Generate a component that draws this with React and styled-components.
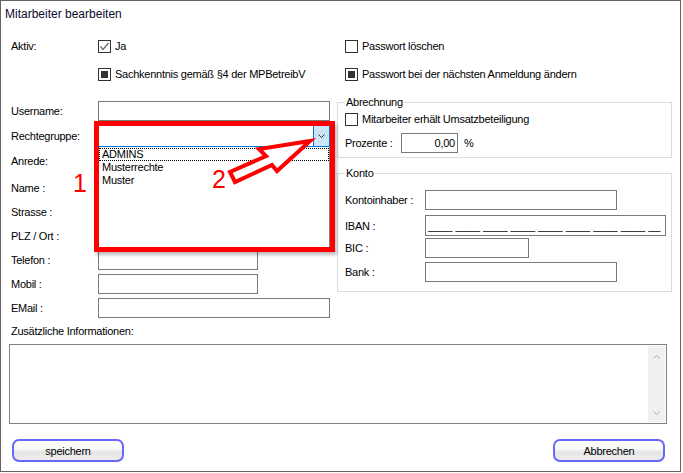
import React from "react";
import styled, { createGlobalStyle } from "styled-components";

const Global = createGlobalStyle`
  html, body { margin: 0; padding: 0; background: #fff; }
  body { font-family: "Liberation Sans", Arial, sans-serif; font-size: 11px; letter-spacing: -0.25px; color: #000; }
  * { box-sizing: border-box; }
`;

const Window = styled.div`
  position: relative;
  width: 681px;
  height: 472px;
  border: 1px solid #646464;
  background: #fff;
  overflow: hidden;
`;

const TitleBar = styled.div`
  height: 26px;
  padding-left: 4px;
  display: flex;
  align-items: center;
  font-size: 12px;
  letter-spacing: 0;
  color: #0b0b2b;
`;

const Body = styled.div`
  display: grid;
  grid-template-columns: 320px 335px;
  column-gap: 6px;
  padding: 9px 0 0 10px;
  align-items: start;
`;

const Column = styled.div`
  display: flex;
  flex-direction: column;
`;

const Row = styled.div`
  display: flex;
  align-items: center;
  height: ${(p) => p.$h || 20}px;
  margin-top: ${(p) => p.$mt || 0}px;
  padding-left: ${(p) => p.$pl || 0}px;
`;

const Label = styled.div`
  width: ${(p) => p.$w || 87}px;
  flex-shrink: 0;
  white-space: nowrap;
`;

const Field = styled.div`
  width: ${(p) => p.$w}px;
  height: 100%;
  border: 1px solid #7a7a7a;
  background: #fff;
  display: flex;
  align-items: center;
  justify-content: ${(p) => (p.$right ? "flex-end" : "flex-start")};
  padding: 0 2px;
  white-space: pre;
  flex-shrink: 0;
  letter-spacing: ${(p) => (p.$mask ? "0" : "inherit")};
`;

const Unit = styled.span`
  margin-left: 6px;
`;

const Box = styled.span`
  width: 13px;
  height: 13px;
  border: 1px solid #333;
  background: #fff;
  display: inline-flex;
  align-items: center;
  justify-content: center;
  flex-shrink: 0;
  margin-right: 4px;
`;

const Fill = styled.span`
  width: 7px;
  height: 7px;
  background: #333;
`;

const CheckLabel = styled.span`
  white-space: nowrap;
`;

function Check({ state, children }) {
  return (
    <>
      <Box>
        {state === "checked" && (
          <svg width="11" height="11" viewBox="0 0 11 11">
            <polyline points="1.5,5.5 4,8.5 9.5,2" fill="none" stroke="#6f6f6f" strokeWidth="1.4" />
          </svg>
        )}
        {state === "filled" && <Fill />}
      </Box>
      <CheckLabel>{children}</CheckLabel>
    </>
  );
}

const ComboWrap = styled.div`
  position: relative;
  width: 232px;
  height: 100%;
`;

const ComboBox = styled.div`
  height: 100%;
  border: 1px solid #0078d7;
  background: #fff;
  display: flex;
  justify-content: flex-end;
`;

const ComboButton = styled.div`
  width: 16px;
  height: 100%;
  background: #cce4f7;
  border-left: 1px solid #0078d7;
  display: flex;
  align-items: center;
  justify-content: center;
`;

const DropList = styled.div`
  position: absolute;
  left: 0;
  top: 100%;
  width: 232px;
  height: 105px;
  border: 1px solid #828282;
  border-top: none;
  background: #fff;
  padding-top: 1px;
  z-index: 2;
`;

const DropItem = styled.div`
  height: 13px;
  line-height: 11px;
  padding-left: 2px;
  border: 1px dotted ${(p) => (p.$focus ? "#000" : "transparent")};
  white-space: nowrap;
`;

const Group = styled.fieldset`
  margin: ${(p) => p.$mt}px 0 0 0;
  padding: 0 0 ${(p) => p.$pb}px 7px;
  border: 1px solid #dcdcdc;
  min-width: 0;
`;

const Legend = styled.legend`
  padding: 0 1px;
  margin: 0;
  font-size: 11px;
  line-height: 14px;
`;

const Bottom = styled.div`
  padding: 0 14px 0 8px;
`;

const InfoLabel = styled.div`
  margin-top: 4px;
  height: 18px;
  display: flex;
  align-items: center;
  padding-left: 2px;
`;

const Memo = styled.div`
  margin-top: 4px;
  width: 658px;
  height: 80px;
  border: 1px solid #828282;
  display: flex;
  justify-content: flex-end;
  padding: 1px;
`;

const ScrollBar = styled.div`
  width: 17px;
  background: #f0f0f0;
  display: flex;
  flex-direction: column;
  justify-content: space-between;
  align-items: center;
  padding: 9px 0 7px;
`;

const Buttons = styled.div`
  display: flex;
  justify-content: space-between;
  margin-top: 15px;
  padding: 0 1px 0 3px;
`;

const Button = styled.button`
  width: 112px;
  height: 23px;
  border: 2px solid #6868f8;
  border-radius: 7px;
  background: linear-gradient(#ffffff 0%, #fafafa 40%, #e6e6e6 60%, #ededed 100%);
  font: 11px "Liberation Sans", Arial, sans-serif;
  letter-spacing: -0.25px;
  color: #000;
  padding: 0;
`;

const RedFrame = styled.div`
  position: absolute;
  left: 93px;
  top: 120px;
  width: 241px;
  height: 131px;
  border: 5px solid #ff0000;
  box-shadow: 2px 3px 3px rgba(0, 0, 0, 0.25);
  pointer-events: none;
  z-index: 3;
`;

const Num = styled.div`
  position: absolute;
  left: ${(p) => p.$x}px;
  top: ${(p) => p.$y}px;
  font-size: 25px;
  line-height: 25px;
  letter-spacing: 0;
  color: #ff0000;
  z-index: 3;
`;

const ArrowSvg = styled.svg`
  position: absolute;
  left: 224px;
  top: 134px;
  overflow: visible;
  z-index: 4;
`;

const Chevron = ({ up, color = "#333" }) => (
  <svg width="7" height="4" viewBox="0 0 7 4">
    <polyline
      points={up ? "0.5,3.5 3.5,0.5 6.5,3.5" : "0.5,0.5 3.5,3.5 6.5,0.5"}
      fill="none"
      stroke={color}
      strokeWidth="1"
    />
  </svg>
);

export default function App() {
  return (
    <>
      <Global />
      <Window>
        <TitleBar>Mitarbeiter bearbeiten</TitleBar>
        <Body>
          <Column>
            <Row>
              <Label>Aktiv:</Label>
              <Check state="checked">Ja</Check>
            </Row>
            <Row $mt={8}>
              <Label />
              <Check state="filled">Sachkenntnis gemäß §4 der MPBetreibV</Check>
            </Row>
            <Row $mt={17}>
              <Label>Username:</Label>
              <Field $w={232} />
            </Row>
            <Row $mt={4} $h={22}>
              <Label>Rechtegruppe:</Label>
              <ComboWrap>
                <ComboBox>
                  <ComboButton>
                    <Chevron />
                  </ComboButton>
                </ComboBox>
                <DropList>
                  <DropItem $focus>ADMINS</DropItem>
                  <DropItem>Musterrechte</DropItem>
                  <DropItem>Muster</DropItem>
                </DropList>
              </ComboWrap>
            </Row>
            <Row $mt={3} $h={21}>
              <Label>Anrede:</Label>
              <Field $w={232} />
            </Row>
            <Row $mt={7}>
              <Label>Name :</Label>
              <Field $w={232} />
            </Row>
            <Row $mt={4}>
              <Label>Strasse :</Label>
              <Field $w={232} />
            </Row>
            <Row $mt={4}>
              <Label>PLZ / Ort :</Label>
              <Field $w={232} />
            </Row>
            <Row $mt={4}>
              <Label>Telefon :</Label>
              <Field $w={160} />
            </Row>
            <Row $mt={4}>
              <Label>Mobil :</Label>
              <Field $w={160} />
            </Row>
            <Row $mt={4}>
              <Label>EMail :</Label>
              <Field $w={232} />
            </Row>
          </Column>

          <Column>
            <Row $pl={8}>
              <Check state="empty">Passwort löschen</Check>
            </Row>
            <Row $mt={8} $pl={8}>
              <Check state="filled">Passwort bei der nächsten Anmeldung ändern</Check>
            </Row>
            <Group $mt={11} $pb={4}>
              <Legend>Abrechnung</Legend>
              <Row>
                <Check state="empty">Mitarbeiter erhält Umsatzbeteiligung</Check>
              </Row>
              <Row $mt={4}>
                <Label $w={56}>Prozente :</Label>
                <Field $w={57} $right>0,00</Field>
                <Unit>%</Unit>
              </Row>
            </Group>
            <Group $mt={8} $pb={9}>
              <Legend>Konto</Legend>
              <Row $mt={10}>
                <Label $w={80}>Kontoinhaber :</Label>
                <Field $w={192} />
              </Row>
              <Row $mt={5} $h={21}>
                <Label $w={80}>IBAN :</Label>
                <Field $w={241} $mask>____ ____ ____ ____ ____ ____ ____ ____ __</Field>
              </Row>
              <Row $mt={2}>
                <Label $w={80}>BIC :</Label>
                <Field $w={104} />
              </Row>
              <Row $mt={4}>
                <Label $w={80}>Bank :</Label>
                <Field $w={192} />
              </Row>
            </Group>
          </Column>
        </Body>

        <Bottom>
          <InfoLabel>Zusätzliche Informationen:</InfoLabel>
          <Memo>
            <ScrollBar>
              <Chevron up color="#a6a6a6" />
              <Chevron color="#a6a6a6" />
            </ScrollBar>
          </Memo>
          <Buttons>
            <Button>speichern</Button>
            <Button>Abbrechen</Button>
          </Buttons>
        </Bottom>

        <RedFrame />
        <Num $x={72} $y={170}>1</Num>
        <Num $x={211} $y={166}>2</Num>
        <ArrowSvg width="92" height="54" viewBox="0 0 92 54">
          <polygon
            points="85,6 34,14 41,21 5,37 10,47 47,30 52,36"
            fill="#fff"
            stroke="#ff0000"
            strokeWidth="4"
            strokeLinejoin="miter"
          />
        </ArrowSvg>
      </Window>
    </>
  );
}
